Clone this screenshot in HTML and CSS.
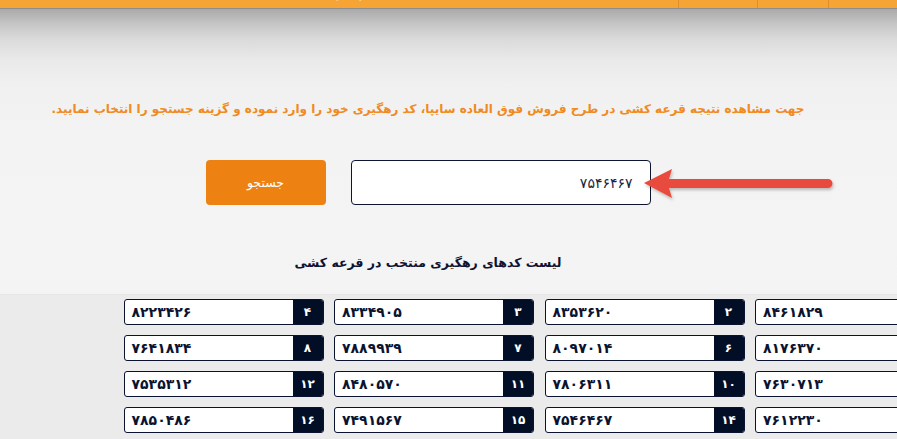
FILE: index.html
```html
<!DOCTYPE html>
<html lang="fa">
<head>
<meta charset="utf-8">
<title>نتیجه قرعه کشی</title>
<link rel="stylesheet" href="styles.css">
</head>
<body>
<div class="topbar">
  <span class="top-faint">۲ &nbsp; &nbsp; ، &nbsp; &nbsp; · &nbsp; &nbsp; ·····</span>
  <div class="top-items">
    <span class="top-item w1"></span>
    <span class="top-item w2"></span>
    <span class="top-item w3"></span>
  </div>
</div>
<div class="panel">
  <div class="panel-inner" dir="rtl">
    <p class="notice">جهت مشاهده نتیجه قرعه کشی در طرح فروش فوق العاده سایپا، کد رهگیری خود را وارد نموده و گزینه جستجو را انتخاب نمایید.</p>
    <div class="search-row">
      <div class="input">۷۵۴۶۴۶۷</div>
      <button class="btn">جستجو</button>
    </div>
    <h2 class="title">لیست کدهای رهگیری منتخب در قرعه کشی</h2>
  </div>
  <svg class="arrow" width="200" height="44" viewBox="0 0 200 44">
    <defs>
      <filter id="sh" x="-10%" y="-30%" width="120%" height="160%">
        <feDropShadow dx="1" dy="2" stdDeviation="1.5" flood-color="#000" flood-opacity="0.25"/>
      </filter>
    </defs>
    <g filter="url(#sh)" fill="#e84c3d">
      <path d="M4 21 L32 7 L29 17 L188 17 A4.5 4.5 0 0 1 188 26 L29 26 L32 36 Z"/>
    </g>
  </svg>
</div>
<div class="grid" dir="rtl">
  <div class="code"><span class="num">۸۴۶۱۸۲۹</span><span class="idx">۱</span></div>
  <div class="code"><span class="num">۸۳۵۳۶۲۰</span><span class="idx">۲</span></div>
  <div class="code"><span class="num">۸۳۳۴۹۰۵</span><span class="idx">۳</span></div>
  <div class="code"><span class="num">۸۲۲۳۴۲۶</span><span class="idx">۴</span></div>
  <div class="code"><span class="num">۸۱۷۶۳۷۰</span><span class="idx">۵</span></div>
  <div class="code"><span class="num">۸۰۹۷۰۱۴</span><span class="idx">۶</span></div>
  <div class="code"><span class="num">۷۸۸۹۹۳۹</span><span class="idx">۷</span></div>
  <div class="code"><span class="num">۷۶۴۱۸۳۴</span><span class="idx">۸</span></div>
  <div class="code"><span class="num">۷۶۳۰۷۱۳</span><span class="idx">۹</span></div>
  <div class="code"><span class="num">۷۸۰۶۳۱۱</span><span class="idx">۱۰</span></div>
  <div class="code"><span class="num">۸۴۸۰۵۷۰</span><span class="idx">۱۱</span></div>
  <div class="code"><span class="num">۷۵۳۵۳۱۲</span><span class="idx">۱۲</span></div>
  <div class="code"><span class="num">۷۶۱۲۲۳۰</span><span class="idx">۱۳</span></div>
  <div class="code"><span class="num">۷۵۴۶۴۶۷</span><span class="idx">۱۴</span></div>
  <div class="code"><span class="num">۷۴۹۱۵۶۷</span><span class="idx">۱۵</span></div>
  <div class="code"><span class="num">۷۸۵۰۴۸۶</span><span class="idx">۱۶</span></div>
</div>
</body>
</html>
```
FILE: styles.css
```css
html, body {
  margin: 0;
  padding: 0;
  overflow: hidden;
}
body {
  background: #ebebeb;
  font-family: "DejaVu Sans", sans-serif;
  width: 897px;
  height: 439px;
}
.topbar {
  height: 8px;
  background: #f6a535;
  border-bottom: 1px solid #8d8d8d;
  display: flex;
  justify-content: flex-end;
  position: relative;
  overflow: hidden;
}
.top-faint {
  position: absolute;
  left: 335px;
  top: -9px;
  font-size: 11px;
  color: #f9d9a8;
}
.top-items {
  display: flex;
}
.top-item {
  border-left: 1px solid #de8f2a;
  height: 8px;
}
.w1 { width: 78px; }
.w2 { width: 70px; }
.w3 { width: 68px; }
.panel {
  position: relative;
  height: 285px;
  background: linear-gradient(to bottom, #a9a9a9 0px, #c4c4c4 14px, #dadada 30px, #e9e9e9 50px, #f0f0f0 75px, #f3f3f3 120px, #f4f4f4 285px);
  border-bottom: 1px solid #e6e6e6;
}
.panel-inner {
  padding-right: 41px;
  display: flex;
  flex-direction: column;
  align-items: center;
}
.notice {
  margin: 90px 0 0;
  color: #f08a22;
  font-weight: bold;
  font-size: 12px;
  line-height: 20px;
  white-space: nowrap;
}
.search-row {
  margin-top: 41px;
  display: flex;
  gap: 25px;
}
.input {
  height: 43px;
  background: #fff;
  border: 1px solid #0d1530;
  border-radius: 4px;
  box-sizing: content-box;
  padding: 0 17px;
  width: 264px;
  display: flex;
  align-items: center;
  font-size: 14px;
  color: #1c2440;
}
.btn {
  width: 120px;
  height: 45px;
  background: #ed8112;
  border: none;
  border-radius: 4px;
  color: #fff;
  font-family: "DejaVu Sans", sans-serif;
  font-size: 12.5px;
  padding: 0;
}
.title {
  margin: 48px 0 0;
  font-size: 12.5px;
  font-weight: bold;
  color: #0d1330;
  line-height: 20px;
}
.arrow {
  position: absolute;
  left: 640px;
  top: 153px;
}
.grid {
  margin: 4px 0 0 123px;
  width: 832px;
  display: grid;
  grid-template-columns: repeat(4, 200px);
  column-gap: 10.5px;
  row-gap: 10px;
}
.code {
  direction: ltr;
  display: flex;
  height: 26px;
  box-sizing: border-box;
  border: 1px solid #0a1430;
  border-radius: 3px;
  background: #fff;
  overflow: hidden;
}
.num {
  flex: 1;
  padding-left: 7px;
  font-weight: bold;
  font-size: 14px;
  line-height: 24px;
  color: #0a1430;
}
.idx {
  width: 30px;
  background: #020d26;
  color: #fff;
  font-weight: bold;
  font-size: 12px;
  line-height: 24px;
  text-align: center;
}
```
